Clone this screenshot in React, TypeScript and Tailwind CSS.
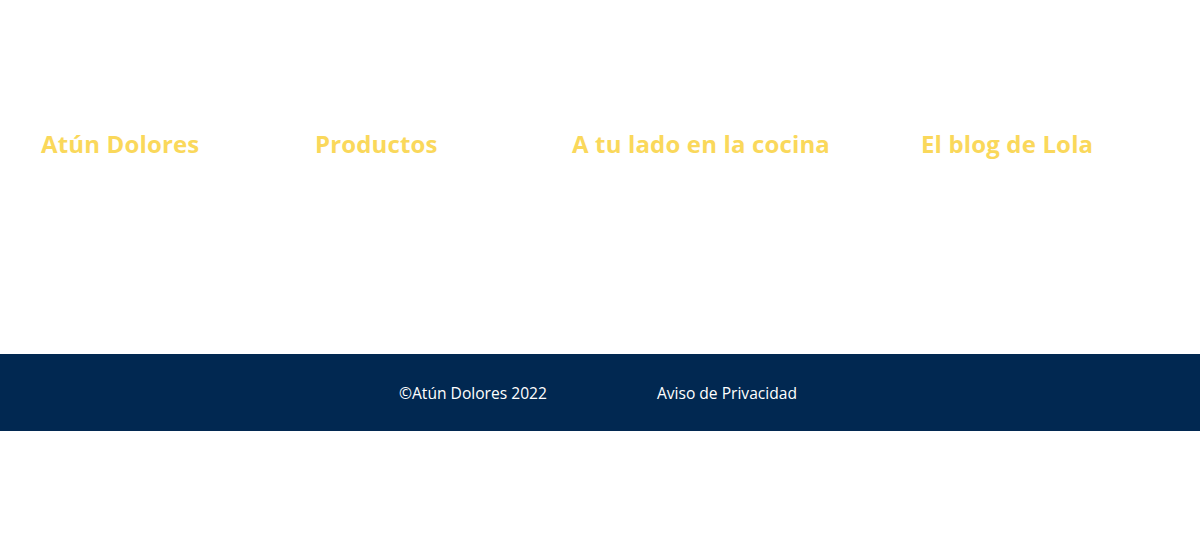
export default function App() {
  const cols = ["Atún Dolores", "Productos", "A tu lado en la cocina", "El blog de Lola"];

  return (
    <div className="min-h-screen bg-white" style={{ fontFamily: "'Open Sans', sans-serif" }}>
      {/* Link columns */}
      <section className="h-[354px] pt-[128px] pl-[41px]">
        <div className="grid grid-cols-[274px_257px_349px_1fr]">
          {cols.map((c) => (
            <h3 key={c} className="text-[24px] leading-[32px] font-bold text-[#fad85b] tracking-[0.15px]">
              {c}
            </h3>
          ))}
        </div>
      </section>

      {/* Footer bar */}
      <footer className="h-[77px] bg-[#012851] flex items-center justify-center gap-[110px] pr-[4px] pt-[2px] text-[15.6px] text-white">
        <span>©Atún Dolores 2022</span>
        <a href="#" className="hover:underline">Aviso de Privacidad</a>
      </footer>
    </div>
  );
}
